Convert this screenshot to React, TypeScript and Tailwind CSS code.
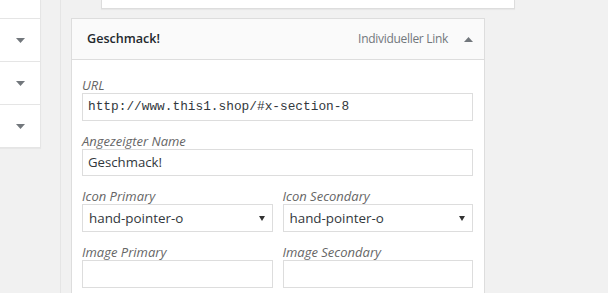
import React from "react";

const Down = ({ className = "" }: { className?: string }) => (
  <svg width="9" height="5" viewBox="0 0 9 5" className={className}>
    <polygon points="0,0 9,0 4.5,5" fill="#72777c" />
  </svg>
);

const SelArrow = () => (
  <svg width="6" height="5" viewBox="0 0 6 5">
    <polygon points="0,0 6,0 3,5" fill="#333" />
  </svg>
);

const Label = ({ children }: { children: React.ReactNode }) => (
  <div className="pt-[12px] text-[13px] leading-[16px] italic text-[#666]">{children}</div>
);

const Input = ({ value, mono, h27 }: { value?: string; mono?: boolean; h27?: boolean }) => (
  <div
    className={
      (h27 ? "h-[27px] " : "h-[28px] ") +
      "border border-[#ddd] bg-white flex items-center px-[5px] text-[#32373c] " +
      (mono ? "font-['Liberation_Mono',monospace] text-[12.8px]" : "text-[13.2px]")
    }
  >
    {value}
  </div>
);

const Select = ({ value }: { value: string }) => (
  <div className="h-[28px] border border-[#ddd] bg-white flex items-center justify-between pl-[6px] pr-[7px] text-[13.4px] text-[#32373c]">
    <span>{value}</span>
    <SelArrow />
  </div>
);

export default function App() {
  return (
    <div className="w-[608px] h-[293px] bg-[#f1f1f1] overflow-hidden flex font-['Open_Sans',sans-serif]">
      <div className="w-[41px] shrink-0 self-start bg-white border-r border-b border-[#e5e5e5] shadow-[0_1px_1px_rgba(0,0,0,0.04)]">
        <div className="h-[19px] border-b border-[#e5e5e5]" />
        <div className="h-[43px] border-b border-[#e5e5e5] flex items-center justify-center">
          <Down />
        </div>
        <div className="h-[43px] border-b border-[#e5e5e5] flex items-center justify-center">
          <Down />
        </div>
        <div className="h-[42px] flex items-center justify-center">
          <Down />
        </div>
      </div>
      <div className="ml-[19px] shrink-0 border-l border-[#e5e5e5] pl-[10px] flex flex-col">
        <div className="ml-[30px] shrink-0 w-[414px] h-[9px] bg-white border-x border-b border-[#ddd] shadow-[0_1px_1px_rgba(0,0,0,0.04)]" />
        <div className="mt-[9px] shrink-0 w-[414px]">
          <div className="h-[42px] border border-[#ddd] bg-[#fafafa] flex items-center pl-[15px] pr-[11px]">
            <span className="text-[12.6px] font-semibold text-[#23282d]">Geschmack!</span>
            <span className="ml-auto text-[12px] tracking-[-0.3px] text-[#72777c]">Individueller Link</span>
            <svg width="9" height="5" viewBox="0 0 9 5" className="ml-[16px]">
              <polygon points="0,5 9,5 4.5,0" fill="#72777c" />
            </svg>
          </div>
          <div className="border-x border-[#ddd] bg-white pl-[10px] pr-[11px] pt-[5px] h-[300px]">
            <Label>URL</Label>
            <Input value="http://www.this1.shop/#x-section-8" mono />
            <Label>Angezeigter Name</Label>
            <Input value="Geschmack!" h27 />
            <div className="grid grid-cols-2 gap-x-[10px]">
              <div>
                <Label>Icon Primary</Label>
                <Select value="hand-pointer-o" />
              </div>
              <div>
                <Label>Icon Secondary</Label>
                <Select value="hand-pointer-o" />
              </div>
              <div>
                <Label>Image Primary</Label>
                <Input />
              </div>
              <div>
                <Label>Image Secondary</Label>
                <Input />
              </div>
            </div>
          </div>
        </div>
      </div>
    </div>
  );
}
